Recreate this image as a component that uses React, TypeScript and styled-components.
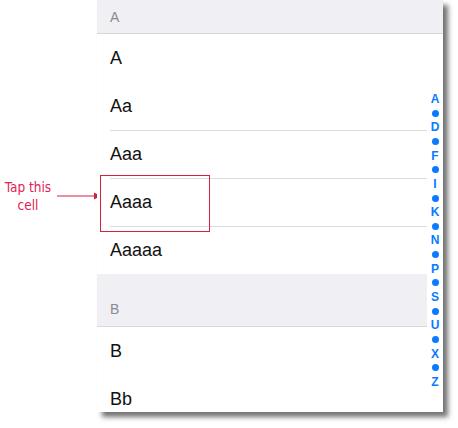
import React from "react";
import styled, { createGlobalStyle } from "styled-components";

const GlobalStyle = createGlobalStyle`
  html, body {
    margin: 0;
    padding: 0;
    background: #ffffff;
  }
  body {
    font-family: "Liberation Sans", Arial, sans-serif;
  }
`;

const Page = styled.div`
  position: relative;
  display: flex;
  width: 458px;
  height: 428px;
`;

const Gutter = styled.div`
  width: 97px;
  flex-shrink: 0;
  display: flex;
  align-items: flex-start;
  padding-top: 178px;
  box-sizing: border-box;
`;

const Callout = styled.div`
  display: flex;
  align-items: center;
  gap: 2px;
`;

const CalloutText = styled.div`
  width: 54px;
  padding-left: 1px;
  font-family: "DejaVu Sans Condensed", "DejaVu Sans", sans-serif;
  font-size: 13.5px;
  line-height: 18px;
  color: #e02255;
  text-align: center;
`;

const Panel = styled.div`
  position: relative;
  width: 346px;
  height: 412px;
  display: flex;
  flex-direction: column;
  overflow: hidden;
  background: #ffffff;
  box-shadow: 5px 5px 5px rgba(0, 0, 0, 0.55);
`;

const SectionHeader = styled.div<{ $tall?: boolean }>`
  flex-shrink: 0;
  display: flex;
  align-items: ${(p) => (p.$tall ? "flex-end" : "center")};
  height: ${(p) => (p.$tall ? "53px" : "34px")};
  padding: ${(p) => (p.$tall ? "0 0 9px 13px" : "0 0 0 13px")};
  box-sizing: border-box;
  background: #efeff4;
  border-bottom: 1px solid #d8d8dc;
  font-size: 14px;
  color: #8a8a8f;
`;

const Body = styled.div`
  flex: 1;
  display: flex;
  min-height: 0;
`;

const List = styled.div`
  flex: 1;
  display: flex;
  flex-direction: column;
  min-width: 0;
`;

const Row = styled.div<{ $line?: boolean }>`
  flex-shrink: 0;
  height: 48px;
  margin-left: 13px;
  display: flex;
  align-items: center;
  box-sizing: border-box;
  border-top: ${(p) => (p.$line ? "1px solid #dcdcdc" : "1px solid transparent")};
  font-size: 18px;
  color: #111111;
`;

const Index = styled.div`
  width: 16px;
  flex-shrink: 0;
  display: flex;
  flex-direction: column;
  align-items: center;
  padding-top: 58px;
`;

const IndexLetter = styled.div`
  height: 14.15px;
  line-height: 14.15px;
  font-size: 12px;
  font-weight: bold;
  color: #0a7aff;
`;

const IndexDot = styled.div`
  height: 14.15px;
  display: flex;
  align-items: center;
  &::before {
    content: "";
    display: block;
    width: 7px;
    height: 7px;
    border-radius: 50%;
    background: #0a7aff;
  }
`;

const Highlight = styled.div`
  position: absolute;
  left: 100px;
  top: 175px;
  width: 110px;
  height: 57px;
  border: 1px solid #d3223f;
  box-sizing: border-box;
  pointer-events: none;
`;

const Arrow = () => (
  <svg width="44" height="8" viewBox="0 0 44 8">
    <line x1="0" y1="4" x2="38" y2="4" stroke="#d3223f" strokeWidth="1" />
    <polygon points="37,0.5 44,4 37,7.5" fill="#d3223f" />
  </svg>
);

const INDEX = ["A", "D", "F", "I", "K", "N", "P", "S", "U", "X", "Z"];

export default function App() {
  return (
    <>
      <GlobalStyle />
      <Page>
        <Gutter>
          <Callout>
            <CalloutText>
              Tap this
              <br />
              cell
            </CalloutText>
            <Arrow />
          </Callout>
        </Gutter>
        <Panel>
          <SectionHeader>A</SectionHeader>
          <Body>
            <List>
              <Row>A</Row>
              <Row>Aa</Row>
              <Row $line>Aaa</Row>
              <Row $line>Aaaa</Row>
              <Row $line>Aaaaa</Row>
              <SectionHeader $tall>B</SectionHeader>
              <Row>B</Row>
              <Row>Bb</Row>
            </List>
            <Index>
              {INDEX.map((l, i) => (
                <React.Fragment key={l}>
                  {i > 0 && <IndexDot />}
                  <IndexLetter>{l}</IndexLetter>
                </React.Fragment>
              ))}
            </Index>
          </Body>
        </Panel>
        <Highlight />
      </Page>
    </>
  );
}
